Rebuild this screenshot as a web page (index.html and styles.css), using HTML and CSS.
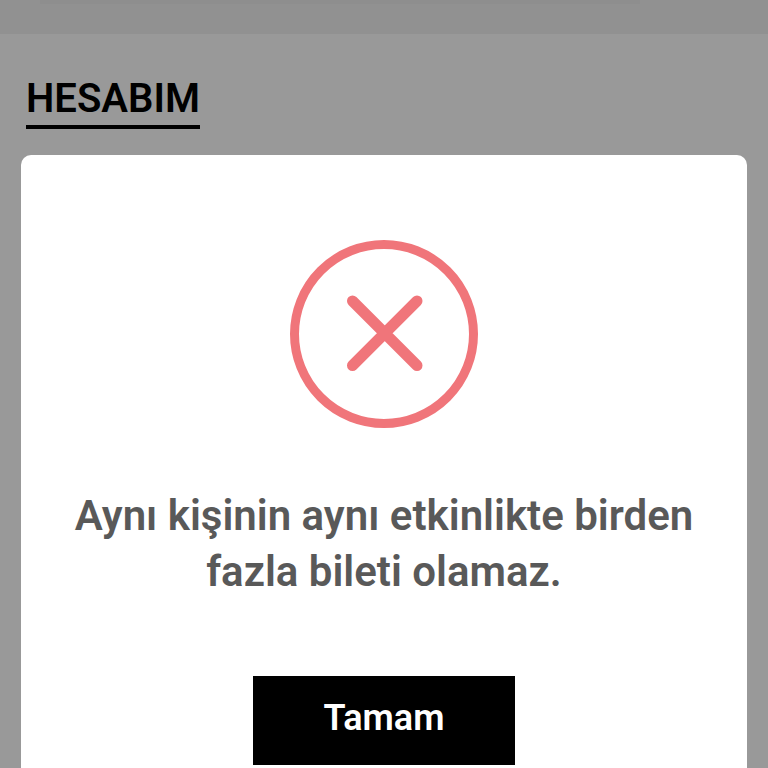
FILE: index.html
```html
<!DOCTYPE html>
<html lang="tr">
<head>
    <meta charset="UTF-8">
    <meta name="viewport" content="width=device-width, initial-scale=1.0">
    <title>Hesabım</title>
    <link rel="stylesheet" href="styles.css">
</head>
<body>

<div class="topbar">
    <div class="topbar-edge"></div>
</div>

<main class="page">
    <h1 class="page-title">HESABIM</h1>

    <div class="modal" role="alertdialog" aria-modal="true" aria-labelledby="modalText">
        <svg class="modal-icon" viewBox="0 0 188 188" aria-hidden="true">
            <circle cx="94" cy="94" r="89.5"/>
            <path d="M62.5 61L127 125.500M127 61L62.5 125.500"/>
        </svg>
        <p class="modal-text" id="modalText">Aynı kişinin aynı etkinlikte birden fazla bileti olamaz.</p>
        <button class="btn" type="button">Tamam</button>
    </div>
</main>

</body>
</html>
```

FILE: styles.css
```css
* { box-sizing: border-box; }
body { margin: 0; height: 100vh; overflow: hidden; background: #999; font-family: Roboto, "Liberation Sans", sans-serif; }
.topbar { height: 34px; padding: 0 128px 0 40px; background: #919191; }
.topbar-edge { height: 4px; background: #8e8e8e; }
.page { padding: 40px 21px; }
.page-title { width: fit-content; margin: 0 0 26px 5px; padding-bottom: 1px; border-bottom: 4px solid #000; color: #000; font-size: 40px; font-weight: 600; line-height: 50px; }
.modal { display: flex; flex-direction: column; align-items: center; padding: 85px 40px 40px; border-radius: 10px; background: #fff; }
.modal-icon { width: 188px; height: 188px; fill: none; stroke: #f0757a; stroke-width: 9; stroke-linecap: round; }
.modal-icon path { stroke-width: 11; }
.modal-text { margin: 60px 0 76px; color: #595959; font-size: 42px; font-weight: 600; line-height: 56px; text-align: center; }
.btn { padding: 16px 71px 20px; border: none; background: #000; color: #fff; font-family: inherit; font-size: 36px; font-weight: 600; line-height: 53px; cursor: pointer; }
```
